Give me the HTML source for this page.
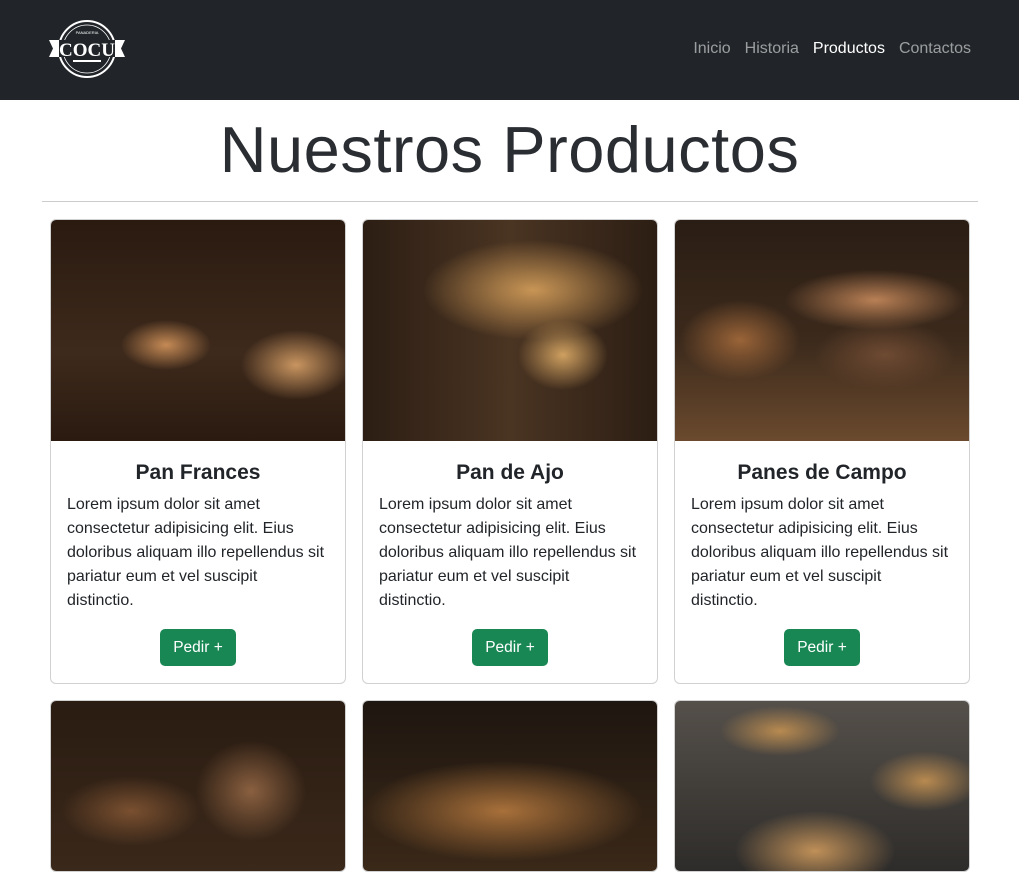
<!DOCTYPE html>
<html><head><meta charset="utf-8"><style>
*{box-sizing:border-box;margin:0;padding:0}
body{width:1019px;height:868px;overflow:hidden;background:#fff;font-family:"Liberation Sans","DejaVu Sans",sans-serif;color:#212529}
nav{height:100px;background:#212529;position:relative}
.logo{position:absolute;left:47px;top:18px;width:80px;height:62px}
.links{position:absolute;right:48px;top:40px;font-size:16px}
.links span{color:rgba(255,255,255,.55);margin-left:14px}
.links span.a{color:#fff}
h1{font-weight:300;font-size:65px;text-align:center;position:absolute;top:110px;left:0;width:100%;line-height:80px;letter-spacing:0.5px;color:#2a2e33}
hr{position:absolute;top:201px;left:42px;width:936px;border:0;border-top:1px solid #ccc}
.card{position:absolute;width:296px;border:1px solid rgba(0,0,0,.18);border-radius:6px;overflow:hidden;background:#fff}
.img{height:221px}
.card h5{text-align:center;font-size:21px;font-weight:bold;margin-top:19px;line-height:26px}
.card p{font-size:16px;line-height:24px;padding:0 4px 0 16px;margin-top:7px;white-space:nowrap}
.btn{display:block;width:76px;height:37px;margin:16px auto 17px;background:#198754;color:#fff;border-radius:5px;text-align:center;line-height:37px;font-size:15.5px}
</style></head><body>
<nav>
<svg class="logo" viewBox="0 0 80 62">
<circle cx="40" cy="31" r="28" fill="none" stroke="#fff" stroke-width="2"/>
<circle cx="40" cy="31" r="24" fill="none" stroke="#fff" stroke-width="0.8"/>
<rect x="4" y="22" width="72" height="17" fill="#212529"/>
<path d="M2 22h10v17H2l4-8.5z M78 22H68v17h10l-4-8.5z" fill="#fff"/>
<text x="40" y="38" text-anchor="middle" fill="#fff" font-family="Liberation Serif" font-size="19" font-weight="bold">COCU</text>
<text x="40" y="16" text-anchor="middle" fill="#fff" font-size="4">PANADERIA</text>
<path d="M26 43h28" stroke="#fff" stroke-width="2"/>
</svg>
<div class="links"><span>Inicio</span><span>Historia</span><span class="a">Productos</span><span>Contactos</span></div>
</nav>
<h1>Nuestros Productos</h1>
<hr>
<div class="card" style="left:50px;top:219px"><div class="img" style="background:radial-gradient(ellipse 45px 25px at 115px 125px,#c58a55,transparent),radial-gradient(ellipse 55px 35px at 245px 145px,#c99560,transparent),linear-gradient(#2a1a10,#3e2a1c 60%,#2a1a10)"></div><h5>Pan Frances</h5><p>Lorem ipsum dolor sit amet<br>consectetur adipisicing elit. Eius<br>doloribus aliquam illo repellendus sit<br>pariatur eum et vel suscipit<br>distinctio.</p><div class="btn">Pedir +</div></div>
<div class="card" style="left:362px;top:219px"><div class="img" style="background:radial-gradient(ellipse 110px 50px at 170px 70px,#c89555,transparent),radial-gradient(ellipse 45px 35px at 200px 135px,#cfa060,transparent),linear-gradient(90deg,#2c1e14,#4a3422 50%,#2c1e14)"></div><h5>Pan de Ajo</h5><p>Lorem ipsum dolor sit amet<br>consectetur adipisicing elit. Eius<br>doloribus aliquam illo repellendus sit<br>pariatur eum et vel suscipit<br>distinctio.</p><div class="btn">Pedir +</div></div>
<div class="card" style="left:674px;top:219px"><div class="img" style="background:radial-gradient(ellipse 90px 30px at 200px 80px,#b98055,transparent),radial-gradient(ellipse 60px 40px at 65px 120px,#9a6438,transparent),radial-gradient(ellipse 70px 35px at 210px 135px,#6e4a32,transparent),linear-gradient(#2a1d14,#3c2a1c 55%,#6b4a2e)"></div><h5>Panes de Campo</h5><p>Lorem ipsum dolor sit amet<br>consectetur adipisicing elit. Eius<br>doloribus aliquam illo repellendus sit<br>pariatur eum et vel suscipit<br>distinctio.</p><div class="btn">Pedir +</div></div>
<div class="card" style="left:50px;top:700px"><div class="img" style="height:170px;background:radial-gradient(ellipse 70px 35px at 80px 110px,#7a5030,transparent),radial-gradient(ellipse 55px 50px at 200px 90px,#8a6040,transparent),linear-gradient(#2a1c12,#3a281a)"></div></div>
<div class="card" style="left:362px;top:700px"><div class="img" style="height:170px;background:radial-gradient(ellipse 140px 50px at 140px 110px,#a8703a,transparent),linear-gradient(#1e1610,#3a2818)"></div></div>
<div class="card" style="left:674px;top:700px"><div class="img" style="height:170px;background:radial-gradient(ellipse 60px 25px at 105px 30px,#b88a50,transparent),radial-gradient(ellipse 55px 30px at 250px 80px,#b88a50,transparent),radial-gradient(ellipse 80px 40px at 140px 150px,#c09058,transparent),linear-gradient(#55504a,#2e2c2a)"></div></div>
</body></html>
